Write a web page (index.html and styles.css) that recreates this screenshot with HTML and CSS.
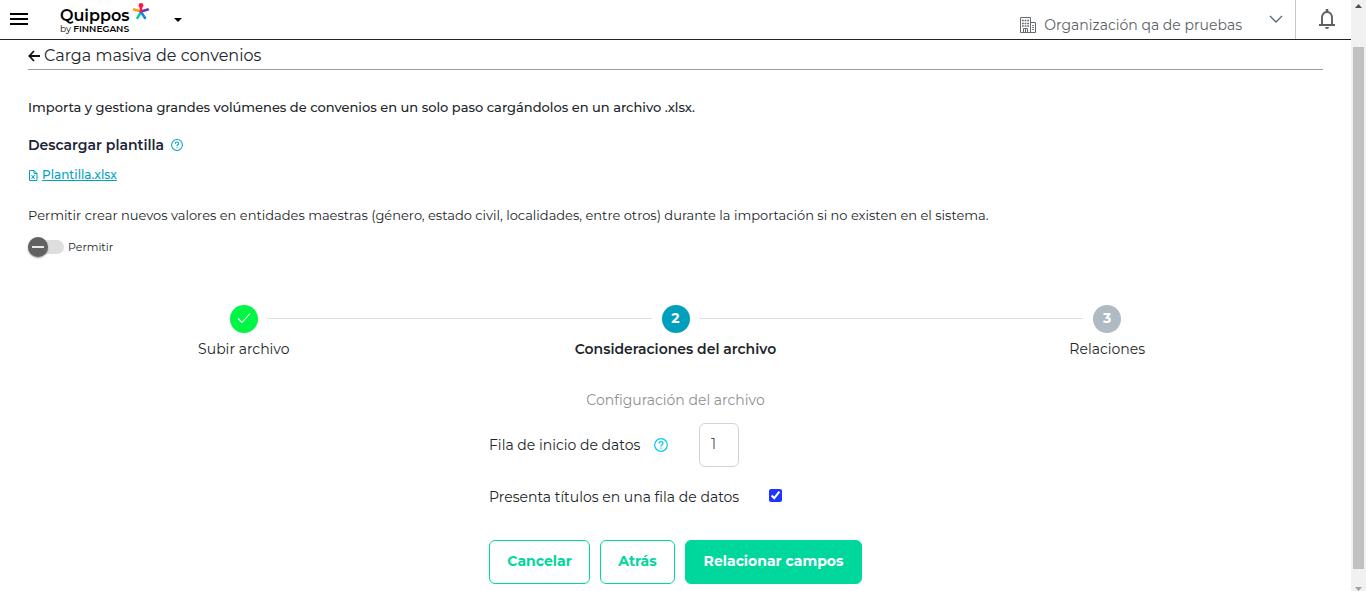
FILE: index.html
```html
<!DOCTYPE html>
<html lang="es">
<head>
<meta charset="utf-8">
<meta name="viewport" content="width=device-width, initial-scale=1">
<title>Carga masiva de convenios</title>
<link rel="stylesheet" href="styles.css">
</head>
<body>
<div class="app">
  <header class="topbar">
    <button class="icon-button menu-button" aria-label="Menú">
      <svg width="18" height="13" viewBox="0 0 18 13" fill="#000"><path d="M0 0h18v2H0zM0 5h18v2H0zM0 10h18v2H0z"/></svg>
    </button>
    <a class="logo" href="#">
      <span class="logo-text">
        <span class="logo-name">Quippos</span>
        <span class="logo-by">by <b>FINNEGANS</b></span>
      </span>
      <svg class="logo-star" width="18" height="18" viewBox="0 0 18 18" fill="none" stroke-width="2.600" stroke-linecap="round">
        <path d="M9 8.500 2 6.500" stroke="#ff9f0a"/>
        <path d="M9 8.500l6.800-2" stroke="#6336c4"/>
        <path d="M9 9l-3.600 6" stroke="#14c7a8"/>
        <path d="M9 9l4 6" stroke="#1787d8"/>
        <path d="M9 8.500V4" stroke="#ff1744"/>
        <circle cx="9" cy="2.500" r="2.400" fill="#ff1744"/>
      </svg>
    </a>
    <button class="icon-button" aria-label="Aplicaciones">
      <svg width="8" height="4" viewBox="0 0 8 4" fill="#000"><path d="M0 0h8L4 4z"/></svg>
    </button>
    <button class="org">
      <svg width="16" height="16" viewBox="0 0 16 16" fill="none" stroke="#666b70">
        <path d="M.5 15.500V.500h10v15M10.500 5.500h5v10H.500M3.500 15.500v-4h4v4M5.500 11.500v4"/>
        <path d="M2 3.500h7M2 6.500h7M2 9h7" stroke-width="1.500" stroke-dasharray="1.800 .8"/>
        <path d="M12.200 8.500h1.800M12.200 10.500h1.800M12.200 12.500h1.800"/>
      </svg>
      <span class="org-name">Organización qa de pruebas</span>
      <svg class="org-chevron" width="14" height="8" viewBox="0 0 14 8" fill="none" stroke="#5b6875" stroke-width="1.300"><path d="m1 1 6 6 6-6"/></svg>
    </button>
    <button class="icon-button bell" aria-label="Notificaciones">
      <svg width="16" height="20" viewBox="0 0 16 20" fill="none" stroke="#5f5f5f" stroke-width="1.900">
        <path d="M3 16V8.500C3 5.300 5 3 8 3s5 2.300 5 5.500V16M0 16h16"/>
        <path d="M8 0v3" stroke-width="2.600"/>
        <path d="M6 18h4a2 2 0 0 1-4 0z" fill="#5f5f5f" stroke="none"/>
      </svg>
    </button>
  </header>

  <main class="page">
    <h1 class="title">
      <a class="back" href="#" aria-label="Volver"><svg width="12" height="12" viewBox="0 0 12 12" fill="none" stroke="#111" stroke-width="1.800"><path d="M12 6H1.500M6 1 1.300 6 6 11"/></svg></a>
      Carga masiva de convenios
    </h1>
    <p class="lead">Importa y gestiona grandes volúmenes de convenios en un solo paso cargándolos en un archivo .xlsx.</p>
    <h2 class="subtitle">Descargar plantilla
      <svg width="12" height="12" viewBox="0 0 14 14" fill="none" stroke="#00a3bf" stroke-width="1.200"><circle cx="7" cy="7" r="6.300"/><path d="M5 5.500C5 4.200 5.900 3.600 7 3.600s2 .700 2 1.800C9 6.800 7 6.700 7 8.400M7 9.500v1.300"/></svg>
    </h2>
    <a class="template" href="#">
      <svg width="10" height="11" viewBox="0 0 10 11" fill="none" stroke="#00a3bf"><path d="M1.500.500h4.500l3 3v7h-7.500zM6 .500v3h3M3.500 5l3.200 4M6.700 5 3.500 9"/></svg>
      <span class="template-name">Plantilla.xlsx</span>
    </a>
    <p class="note">Permitir crear nuevos valores en entidades maestras (género, estado civil, localidades, entre otros) durante la importación si no existen en el sistema.</p>
    <label class="switch"><input class="switch-input" type="checkbox" role="switch">Permitir</label>

    <ol class="steps">
      <li class="step step-done">
        <span class="step-track"><span class="step-dot"><svg width="14" height="12" viewBox="0 0 14 12" fill="none" stroke="#fff" stroke-width="1.100"><path d="m1 6.500 4 4L13 1.500"/></svg></span></span>
        <span class="step-label">Subir archivo</span>
      </li>
      <li class="step step-current" aria-current="step">
        <span class="step-track"><span class="step-dot">2</span></span>
        <span class="step-label">Consideraciones del archivo</span>
      </li>
      <li class="step">
        <span class="step-track"><span class="step-dot">3</span></span>
        <span class="step-label">Relaciones</span>
      </li>
    </ol>

    <form class="config">
      <h3 class="config-title">Configuración del archivo</h3>
      <div class="field field-row">
        <span class="field-head">
          <label for="start-row">Fila de inicio de datos</label>
          <svg width="14" height="14" viewBox="0 0 14 14" fill="none" stroke="#00c8f5" stroke-width="1.200"><circle cx="7" cy="7" r="6.300"/><path d="M5 5.500C5 4.200 5.900 3.600 7 3.600s2 .700 2 1.800C9 6.800 7 6.700 7 8.400M7 9.500v1.300"/></svg>
        </span>
        <input class="row-input" id="start-row" type="text" inputmode="numeric" value="1">
      </div>
      <div class="field field-check">
        <label class="check-label" for="has-titles">Presenta títulos en una fila de datos</label>
        <input class="check" id="has-titles" type="checkbox" checked>
      </div>
      <div class="actions">
        <button class="button button-cancel" type="button">Cancelar</button>
        <button class="button button-back" type="button">Atrás</button>
        <button class="button button-primary" type="button">Relacionar campos</button>
      </div>
    </form>
  </main>
</div>
<div class="scrollbar" aria-hidden="true">
  <svg width="7" height="4" viewBox="0 0 7 4" fill="#505050"><path d="M0 4h7L3.500 0z"/></svg>
  <span class="scrollbar-thumb"></span>
  <svg width="7" height="4" viewBox="0 0 7 4" fill="#a0a0a0"><path d="M0 0h7L3.500 4z"/></svg>
</div>
</body>
</html>
```
FILE: styles.css
```css
* { box-sizing: border-box; }

body {
  margin: 0;
  min-height: 100vh;
  display: flex;
  background: #fff;
  color: #212529;
  font-family: Montserrat, Inter, "Noto Sans", sans-serif;
  font-size: 14px;
  line-height: 20px;
}

h1, h2, h3, p, ol { margin: 0; padding: 0; font-size: 14px; font-weight: 400; }
svg { flex: none; display: block; }
button, input { font: inherit; color: inherit; }

.app { flex: 1; min-width: 0; }

.topbar {
  display: flex;
  align-items: center;
  height: 40px;
  padding-left: 10px;
  border-bottom: 1px solid #1d2529;
}
.icon-button, .org {
  display: flex;
  align-items: center;
  padding: 0;
  border: 0;
  background: none;
}
.menu-button { margin-right: 32px; }
.logo {
  display: flex;
  align-self: stretch;
  align-items: flex-start;
  gap: 2px;
  margin-right: 24px;
  color: #000;
  text-decoration: none;
}
.logo-text { display: flex; flex-direction: column; padding-top: 8px; }
.logo-name { font-size: 16px; line-height: 16px; font-weight: 600; }
.logo-by { font-size: 9px; line-height: 10px; }
.logo-by b { font-weight: 600; }
.logo-star { margin-top: 3px; }
.org {
  align-self: stretch;
  margin-left: auto;
  padding: 10px 12px 0 0;
  gap: 8px;
  border-right: 1px solid #c4c8cc;
  color: #5c6166;
}
.org-chevron { margin: -12px 0 0 19px; }
.bell { width: 55px; padding: 0 0 2px 7px; justify-content: center; align-self: stretch; }

.page { padding: 0 28px; }
.title {
  display: flex;
  align-items: center;
  gap: 4px;
  padding-top: 3px;
  height: 30px;
  border-bottom: 1px solid #9a9ca0;
  font-size: 16px;
}
.lead { margin-top: 27px; font-size: 13px; font-weight: 500; }
.subtitle {
  display: flex;
  align-items: center;
  gap: 7px;
  margin-top: 18px;
  color: #1c2338;
  font-weight: 600;
}
.template {
  display: flex;
  align-items: center;
  gap: 4px;
  width: fit-content;
  margin-top: 10px;
  color: #00a3bf;
  font-size: 12px;
  font-weight: 500;
  text-decoration: none;
}
.template-name { text-decoration: underline; }
.note { margin-top: 20px; font-size: 13px; }

.switch {
  display: flex;
  align-items: center;
  gap: 4px;
  width: fit-content;
  margin-top: 12px;
  font-size: 11px;
}
.switch-input {
  appearance: none;
  display: flex;
  align-items: center;
  width: 36px;
  height: 14px;
  margin: 0;
  border-radius: 7px;
  background: #dedede;
}
.switch-input::before {
  content: "";
  width: 20px;
  height: 20px;
  border-radius: 50%;
  background: linear-gradient(#e8e8e8, #e8e8e8) center / 12px 2px no-repeat #616161;
  box-shadow: 0 1px 2px rgba(0, 0, 0, .4);
}

.steps {
  display: grid;
  grid-template-columns: repeat(3, 1fr);
  margin-top: 48px;
  list-style: none;
}
.step { text-align: center; }
.step-track { display: flex; align-items: center; gap: 10px; }
.step-track::before, .step-track::after {
  content: "";
  flex: 1;
  height: 1px;
  margin-bottom: 2px;
  background: #e0e0e0;
}
.step:first-child .step-track::before, .step:last-child .step-track::after { background: none; }
.step-dot {
  display: flex;
  align-items: center;
  justify-content: center;
  width: 28px;
  height: 28px;
  padding-bottom: 2px;
  border-radius: 50%;
  background: #b0bac3;
  color: #fff;
  font-weight: 700;
}
.step-done .step-dot { background: #00f545; }
.step-current .step-dot { background: #00a0bd; }
.step-label { display: block; margin-top: 6px; }
.step-current .step-label { font-weight: 600; }

.config { width: fit-content; margin: 31px auto 0; padding-bottom: 7px; }
.config-title { color: #8f8f8f; text-align: center; }
.field { display: flex; align-items: center; }
.field-row { gap: 31px; margin-top: 13px; }
.field-head { display: flex; align-items: center; justify-content: space-between; width: 179px; }
.row-input {
  width: 40px;
  height: 44px;
  padding: 0 11px 2px;
  border: 1px solid #ced4da;
  border-radius: 6px;
  background: #fff;
  color: #495057;
}
.field-check { margin-top: 20px; }
.check-label { width: 280px; }
.check { width: 13px; height: 13px; margin: 0 0 4px; accent-color: #1f35ff; }

.actions { display: flex; gap: 10px; margin-top: 33px; }
.button {
  height: 44px;
  padding: 0 0 2px;
  border: 1px solid #00d79d;
  border-radius: 6px;
  background: #fff;
  color: #00d79d;
  font-weight: 700;
}
.button-cancel { width: 101px; }
.button-back { width: 75px; }
.button-primary { width: 177px; background: #00d79d; color: #fff; }

.scrollbar {
  display: flex;
  flex-direction: column;
  align-items: center;
  width: 15px;
  padding-top: 4px;
  background: #f1f1f1;
}
.scrollbar-thumb { flex: 1; width: 11px; margin: 39px 0 18px; background: #c1c1c1; }
```
